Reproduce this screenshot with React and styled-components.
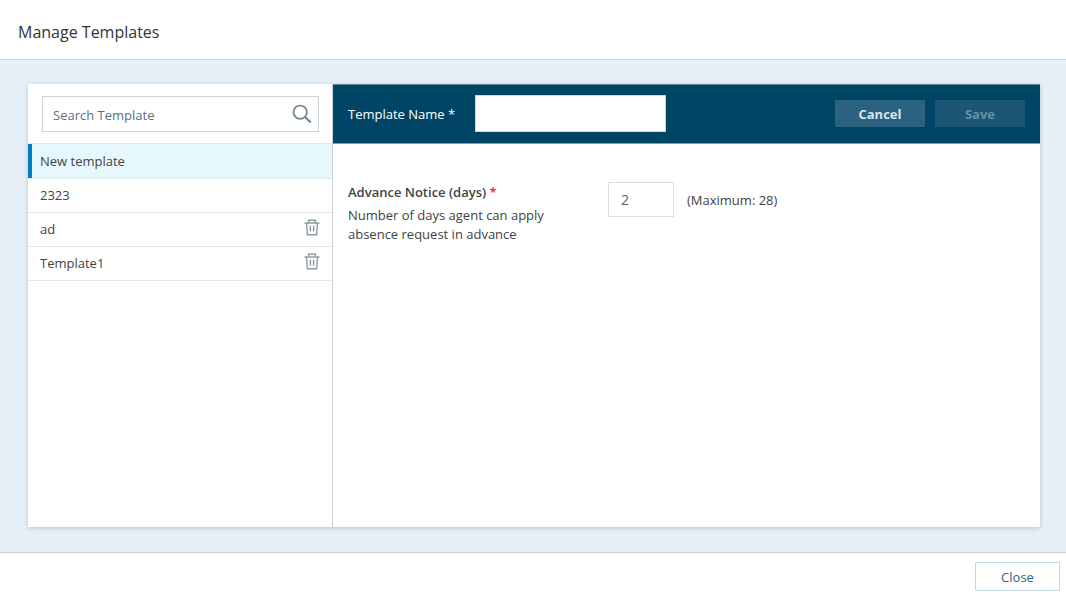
import React, { useState } from 'react';
import styled, { createGlobalStyle } from 'styled-components';

const GlobalStyle = createGlobalStyle`
  *, *::before, *::after { box-sizing: border-box; }
  body {
    margin: 0;
    background: #fff;
    color: #414344;
    font-family: "Open Sans", "Liberation Sans", sans-serif;
    font-size: 13px;
    line-height: 19px;
  }
  button, input { font: inherit; }
`;

const Dialog = styled.div`
  display: flex;
  flex-direction: column;
  min-height: 100vh;
`;

const TitleBar = styled.header`
  display: flex;
  align-items: center;
  height: 60px;
  padding: 4px 18px 0;
  border-bottom: 1px solid #cbd1d6;
`;

const Title = styled.h1`
  margin: 0;
  font-size: 16px;
  font-weight: 400;
  line-height: 22px;
  color: #333;
`;

const Body = styled.main`
  display: flex;
  flex: 1;
  padding: 24px 26px 25px 28px;
  background: #e8f0f7;
`;

const Panel = styled.div`
  display: flex;
  flex: 1;
  background: #fff;
  box-shadow: 0 1px 5px rgba(60, 80, 100, 0.28);
`;

const Sidebar = styled.nav`
  flex: 0 0 305px;
  border-right: 1px solid #c4d0da;
`;

const SearchArea = styled.div`
  height: 60px;
  padding: 12px 13px 0 14px;
  border-bottom: 1px solid #e4e8eb;
`;

const SearchBox = styled.label`
  display: flex;
  align-items: center;
  height: 36px;
  padding: 0 6px 0 10px;
  border: 1px solid #cfd3d6;
`;

const SearchInput = styled.input`
  flex: 1;
  min-width: 0;
  padding: 2px 0 0;
  border: 0;
  outline: 0;
  background: transparent;
  color: #414344;
  &::placeholder { color: #5b7280; opacity: 1; }
`;

const TemplateList = styled.ul`
  margin: 0;
  padding: 0;
  list-style: none;
`;

const TemplateRow = styled.li`
  display: flex;
  align-items: center;
  height: 34px;
  padding: 0 12px;
  border-bottom: 1px solid #e2e7ea;
  background: ${(p) => (p.$selected ? '#e6f8fe' : '#fff')};
  box-shadow: ${(p) => (p.$selected ? 'inset 4px 0 #0080c0' : 'none')};

  &:first-child {
    height: 35px;
    padding-top: 1px;
  }
`;

const TemplateButton = styled.button`
  flex: 1;
  padding: 0;
  border: 0;
  background: none;
  color: inherit;
  text-align: left;
  cursor: pointer;
`;

const IconButton = styled.button`
  display: flex;
  padding: 0 0 4px;
  border: 0;
  background: none;
  color: #8a9ea3;
  cursor: pointer;
`;

const Detail = styled.form`
  flex: 1;
  min-width: 0;
`;

const DetailHeader = styled.div`
  display: flex;
  align-items: center;
  height: 60px;
  padding: 0 15px 1px;
  border-top: 1px solid #5b8299;
  border-bottom: 1px solid #7c9db0;
  background: #004466;
`;

const NameLabel = styled.label`
  margin-right: 20px;
  padding-top: 1px;
  color: #fff;
  font-weight: 500;
`;

const NameInput = styled.input`
  width: 191px;
  height: 37px;
  padding: 0 12px;
  border: 1px solid #cbd8e0;
  outline: 0;
  background: #fff;
`;

const Actions = styled.div`
  display: flex;
  gap: 10px;
  margin-left: auto;
`;

const ActionButton = styled.button`
  width: 90px;
  height: 27px;
  padding: 2px 0 0;
  border: 0;
  border-radius: 1px;
  background: #2b627f;
  color: #d6e4eb;
  font-weight: 700;
  &:disabled { background: #1b5775; color: #6490a8; }
`;

const Field = styled.div`
  display: flex;
  align-items: flex-start;
  padding: 38px 15px 0;
`;

const FieldText = styled.div`
  width: 220px;
  margin-right: 40px;
  padding-top: 1px;
`;

const FieldLabel = styled.label`
  display: block;
  margin-bottom: 4px;
  font-weight: 600;
`;

const Required = styled.span`
  color: #f5222d;
`;

const Description = styled.p`
  margin: 0;
`;

const DaysInput = styled.input`
  width: 66px;
  height: 35px;
  margin-right: 13px;
  padding: 0 12px;
  border: 1px solid #d9dfe6;
  outline: 0;
  color: #5c6268;
  font-size: 14px;
`;

const Hint = styled.span`
  line-height: 36px;
`;

const Footer = styled.footer`
  display: flex;
  align-items: center;
  justify-content: flex-end;
  height: 47px;
  padding: 0 6px;
  border-top: 1px solid #cbd1d6;
`;

const CloseButton = styled.button`
  width: 85px;
  height: 29px;
  padding: 2px 0 0;
  border: 1px solid #bfdae3;
  border-radius: 1px;
  background: #fff;
  color: #2b647f;
  font-weight: 500;
`;

const SearchIcon = () => (
  <svg width="20" height="20" viewBox="0 0 20 20" fill="none" stroke="#6e8592" aria-hidden="true">
    <circle cx="8.2" cy="8.2" r="6.7" strokeWidth="1.7" />
    <path d="M13 13l5.7 5.4" strokeWidth="2.1" />
  </svg>
);

const TrashIcon = () => (
  <svg width="16" height="17" viewBox="0 0 16 17" fill="none" stroke="currentColor" strokeWidth="1.4" aria-hidden="true">
    <path d="M0.5 4h15M4.6 4V1.2h6.8V4M2.5 4l.9 11.8h9.2L13.5 4" />
    <path d="M6.4 6.8v5.7M9.6 6.8v5.7" strokeWidth="1.5" />
  </svg>
);

const TEMPLATES = [
  { name: 'New template' },
  { name: '2323' },
  { name: 'ad', removable: true },
  { name: 'Template1', removable: true },
];

export default function App() {
  const [selected, setSelected] = useState('New template');

  return (
    <Dialog>
      <GlobalStyle />
      <TitleBar>
        <Title>Manage Templates</Title>
      </TitleBar>
      <Body>
        <Panel>
          <Sidebar aria-label="Templates">
            <SearchArea>
              <SearchBox>
                <SearchInput type="text" placeholder="Search Template" aria-label="Search Template" />
                <SearchIcon />
              </SearchBox>
            </SearchArea>
            <TemplateList>
              {TEMPLATES.map(({ name, removable }) => (
                <TemplateRow key={name} $selected={name === selected}>
                  <TemplateButton type="button" onClick={() => setSelected(name)}>{name}</TemplateButton>
                  {removable && (
                    <IconButton type="button" aria-label={`Delete ${name}`}>
                      <TrashIcon />
                    </IconButton>
                  )}
                </TemplateRow>
              ))}
            </TemplateList>
          </Sidebar>
          <Detail onSubmit={(e) => e.preventDefault()}>
            <DetailHeader>
              <NameLabel htmlFor="template-name">Template Name *</NameLabel>
              <NameInput id="template-name" type="text" />
              <Actions>
                <ActionButton type="button">Cancel</ActionButton>
                <ActionButton type="submit" disabled>Save</ActionButton>
              </Actions>
            </DetailHeader>
            <Field>
              <FieldText>
                <FieldLabel htmlFor="notice-days">
                  Advance Notice (days) <Required>*</Required>
                </FieldLabel>
                <Description>Number of days agent can apply absence request in advance</Description>
              </FieldText>
              <DaysInput id="notice-days" type="text" inputMode="numeric" defaultValue="2" />
              <Hint>(Maximum: 28)</Hint>
            </Field>
          </Detail>
        </Panel>
      </Body>
      <Footer>
        <CloseButton type="button">Close</CloseButton>
      </Footer>
    </Dialog>
  );
}
